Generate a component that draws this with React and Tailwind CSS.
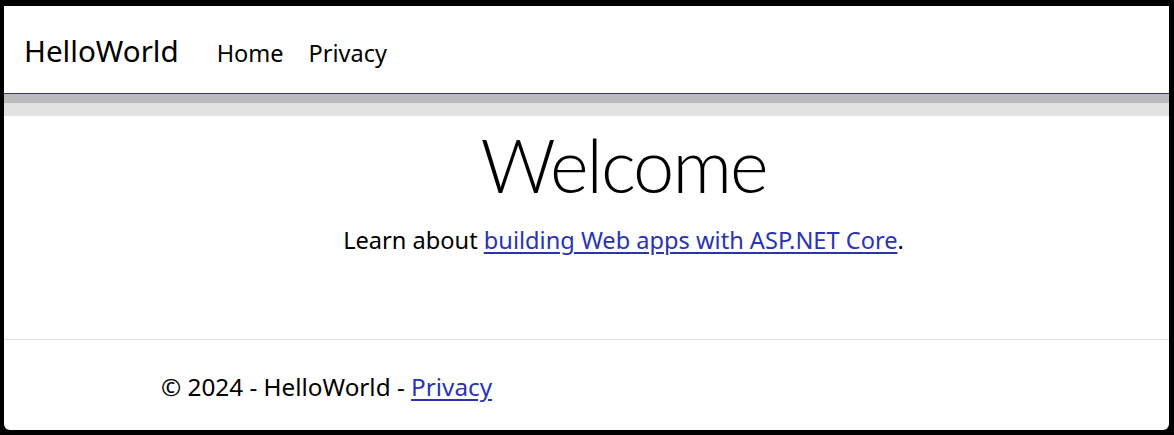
export default function App() {
  return (
    <div className="w-[1174px] h-[435px] bg-black pt-[6px] pl-[4px] pr-[5px] pb-[5px]">
      <div className="w-full h-full bg-white rounded-b-[6px] flex flex-col overflow-hidden font-['Noto_Sans',sans-serif] text-black">
        <header className="h-[88px] flex items-baseline pt-[30px] pl-[20px] border-b border-[#3c3c5a] shrink-0">
          <span className="text-[29.6px] leading-none">HelloWorld</span>
          <nav className="flex items-baseline ml-[38px] gap-[25px]">
            <a className="text-[23.5px] leading-none">Home</a>
            <a className="text-[23.5px] leading-none">Privacy</a>
          </nav>
        </header>
        <div className="h-[9px] bg-[#bbbbbd] shrink-0"></div>
        <div className="h-[13px] bg-[#e1e1e1] shrink-0"></div>
        <main className="flex flex-col items-center h-[223px] pl-[74px] shrink-0">
          <h1 className="font-['Lato',sans-serif] text-[74px] font-light leading-none mt-[12px] tracking-[-2px]">Welcome</h1>
          <p className="text-[23.6px] leading-none mt-[27px]">
            Learn about{" "}
            <a className="text-[#2a33b4] underline underline-offset-[3px]">building Web apps with ASP.NET Core</a>.
          </p>
        </main>
        <footer className="border-t border-[#dedede] flex-1 pl-[157px] pt-[35px]">
          <div className="text-[24.3px] leading-none">
            © 2024 - HelloWorld - <a className="text-[#2a33b4] underline underline-offset-[3px]">Privacy</a>
          </div>
        </footer>
      </div>
    </div>
  );
}
